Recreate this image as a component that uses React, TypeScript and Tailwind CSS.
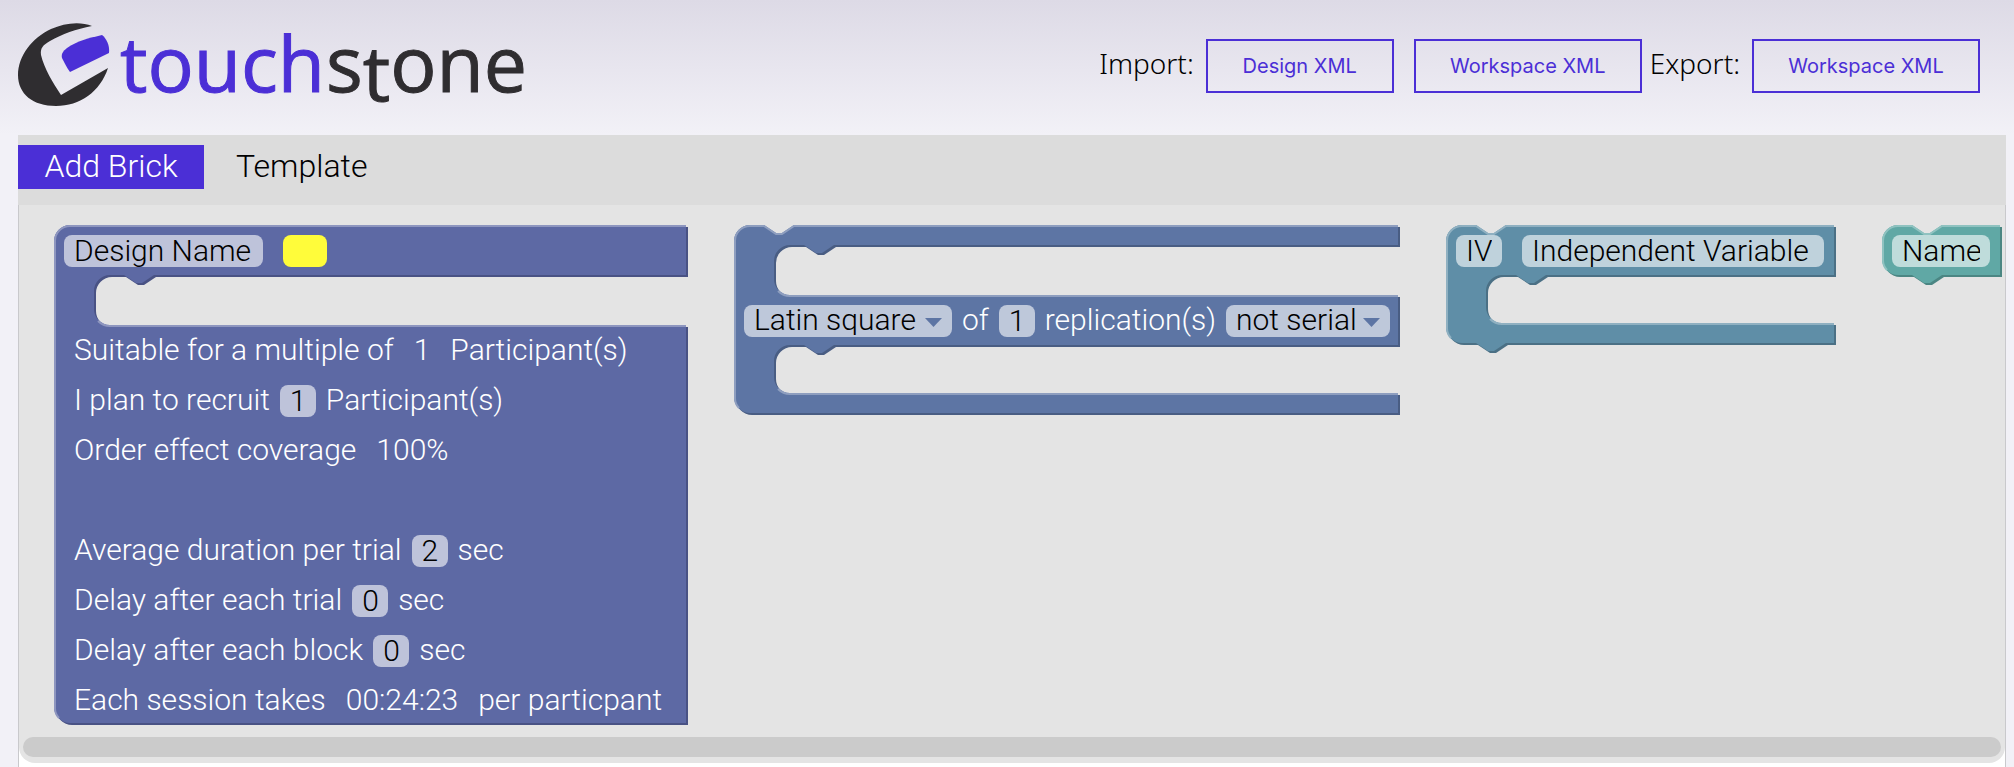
import type { ReactNode } from 'react';

type Cavity = { top: number; bottom: number };

type Tone = { fill: string; dark: string; light: string };

const INDIGO: Tone = { fill: '#5d69a4', dark: '#495284', light: '#8e96bf' };
const BLUE: Tone = { fill: '#5d75a4', dark: '#495d83', light: '#8e9ebf' };
const STEEL: Tone = { fill: '#5f8ea7', dark: '#4b7085', light: '#8fb0c1' };
const TEAL: Tone = { fill: '#60a8a5', dark: '#4b8683', light: '#8fc2c0' };

function outline(w: number, h: number, cavities: Cavity[], topNotch: boolean, bottomNotch: boolean) {
  const notch = topNotch ? 'H30 l12,8 6,0 12,-8' : '';
  const inner = cavities
    .map((c) => `V${c.top} H100 l-12,8 -6,0 -12,-8 h-14 a16,16 0 0 0 -16,16 V${c.bottom - 16} a16,16 0 0 0 16,16 H${w}`)
    .join(' ');
  const tab = bottomNotch ? 'H60 l-12,8 -6,0 -12,-8' : '';
  return `M0,16 A16,16 0 0 1 16,0 ${notch} H${w} ${inner} V${h} ${tab} H16 A16,16 0 0 1 0,${h - 16} Z`;
}

function highlight(w: number, h: number, cavities: Cavity[], topNotch: boolean) {
  const notch = topNotch ? 'H30 l12,8 6,0 12,-8' : '';
  const inner = cavities.map((c) => `M44,${c.bottom - 4} A17,17 0 0 0 56,${c.bottom + 1} H${w}`).join(' ');
  return `M5,${h - 5} A15,15 0 0 1 1,${h - 16} V16 A15,15 0 0 1 16,1 ${notch} H${w} ${inner}`;
}

function Brick({
  tone,
  w,
  h,
  cavities = [],
  topNotch = false,
  bottomNotch = false,
  className,
  children,
}: {
  tone: Tone;
  w: number;
  h: number;
  cavities?: Cavity[];
  topNotch?: boolean;
  bottomNotch?: boolean;
  className: string;
  children: ReactNode;
}) {
  const d = outline(w, h, cavities, topNotch, bottomNotch);
  return (
    <section className={`relative shrink-0 ${className}`}>
      <svg className="absolute inset-0 overflow-visible" width={w} height={h} aria-hidden="true">
        <path d={d} fill={tone.dark} transform="translate(2 2)" />
        <path d={d} fill={tone.fill} />
        <path d={highlight(w, h, cavities, topNotch)} fill="none" stroke={tone.light} strokeWidth="2" />
      </svg>
      <div className="relative">{children}</div>
    </section>
  );
}

const chip = 'h-8 rounded-lg bg-white/60 px-[10px] pb-[2px] text-black';

function TextField({ label, value, width }: { label: string; value: string; width: string }) {
  return <input type="text" aria-label={label} defaultValue={value} className={`${chip} ${width}`} />;
}

function SelectField({ label, value, options, width, arrow }: { label: string; value: string; options: string[]; width: string; arrow: string }) {
  return (
    <span className="relative flex">
      <select aria-label={label} defaultValue={value} className={`${chip} appearance-none ${width}`}>
        {options.map((o) => (
          <option key={o}>{o}</option>
        ))}
      </select>
      <svg className="pointer-events-none absolute right-[10px] top-[13px]" width="17" height="9" viewBox="0 0 17 9" aria-hidden="true">
        <path d="M0 0H17L8.500 9Z" fill={arrow} />
      </svg>
    </span>
  );
}

function Row({ children, wide = false }: { children?: ReactNode; wide?: boolean }) {
  return (
    <div className={`flex h-[50px] items-start pl-[10px] pt-[10px] leading-[30px] whitespace-nowrap ${wide ? 'gap-5' : 'gap-[10px]'}`}>
      {children}
    </div>
  );
}

function NumberRow({ id, before, value, after }: { id: string; before: string; value: string; after: string }) {
  return (
    <Row>
      <label htmlFor={id} className="pl-[10px]">
        {before}
      </label>
      <input id={id} type="text" inputMode="numeric" defaultValue={value} className={`${chip} w-9`} />
      <span>{after}</span>
    </Row>
  );
}

function ReadoutRow({ before, value, after }: { before: string; value: string; after?: string }) {
  return (
    <Row>
      <span className="pl-[10px]">{before}</span>
      <output className="px-[10px]">{value}</output>
      {after && <span>{after}</span>}
    </Row>
  );
}

function Logo() {
  return (
    <svg width="516" height="92" viewBox="0 0 516 92" role="img" aria-label="touchstone" className="overflow-visible">
      <path
        d="M74 8C62 3 46 5 33 11C14 20 0 38 0 57C0 76 15 88 38 88C62 88 82 74 90 50L43 77C35 65 26 50 23 37C22 30 25 27 32 23C44 16 58 11 74 8Z"
        fill="#2f2d30"
      />
      <path d="M84 17C88 20 92 27 91 35L52 54C49 50 46 44 44 40C43 36 45 33 49 30C59 23 71 20 84 17Z" fill="#4b2fd6" />
      <text y="74" fontSize="77" strokeWidth="1" className="font-['Open_Sans'] font-normal">
        <tspan x="102" fill="#4b2fd6" stroke="#4b2fd6">
          touch
        </tspan>
        <tspan x="308" fill="#2f2d30" stroke="#2f2d30">
          s
        </tspan>
        <tspan dy="9" fill="#2f2d30" stroke="#2f2d30">
          t
        </tspan>
        <tspan dy="-9" fill="#2f2d30" stroke="#2f2d30">
          one
        </tspan>
      </text>
    </svg>
  );
}

function OutlineButton({ children, width }: { children: ReactNode; width: string }) {
  return (
    <button
      type="button"
      className={`h-[54px] border-2 border-[#4b2fd6] font-['Inter',sans-serif] text-[20px] font-normal text-[#4b2fd6] ${width}`}
    >
      {children}
    </button>
  );
}

export default function App() {
  return (
    <div className="flex min-h-screen flex-col bg-[#f2f1f7] bg-[linear-gradient(to_bottom,#dddae6_0,#f2f1f7_135px)] pr-2 pl-[18px] font-['Roboto',sans-serif] font-light">
      <header className="flex h-[135px] items-start justify-between pr-[26px] pt-[18px]">
        <a href="#home">
          <Logo />
        </a>
        <div className="flex items-center pt-[21px] font-['Noto_Sans',sans-serif] text-[28px]">
          <span className="pr-3 pb-[6px]">Import:</span>
          <OutlineButton width="w-[188px]">Design XML</OutlineButton>
          <span className="w-5" />
          <OutlineButton width="w-[228px]">Workspace XML</OutlineButton>
          <span className="pr-3 pb-[6px] pl-2">Export:</span>
          <OutlineButton width="w-[228px]">Workspace XML</OutlineButton>
        </div>
      </header>

      <main className="flex flex-1 flex-col">
        <nav role="tablist" className="flex h-[70px] items-start bg-[#dcdcdc] pt-[10px] text-[32px] leading-[42px]">
          <button type="button" role="tab" aria-selected="true" className="w-[186px] bg-[#4b2fd6] pb-[2px] text-white">
            Add Brick
          </button>
          <button type="button" role="tab" aria-selected="false" className="px-8 pb-[2px] text-black">
            Template
          </button>
        </nav>

        <div className="flex-1 border-x border-[#c9c9cc] bg-white">
          <div className="overflow-hidden rounded-b-2xl bg-[#e4e4e4] pb-[6px]">
            <div className="flex items-start gap-[46px] pt-5 pb-3 pl-[35px] text-[30px] text-white">
              <Brick tone={INDIGO} w={632} h={498} cavities={[{ top: 50, bottom: 100 }]} className="h-[500px] w-[634px]">
                <Row wide>
                  <TextField label="Design name" value="Design Name" width="w-[199px]" />
                  <button type="button" aria-label="Design colour" className="h-8 w-11 rounded-lg bg-[#fffc3a]" />
                </Row>
                <Row />
                <ReadoutRow before="Suitable for a multiple of" value="1" after="Participant(s)" />
                <NumberRow id="recruit" before="I plan to recruit" value="1" after="Participant(s)" />
                <ReadoutRow before="Order effect coverage" value="100%" />
                <Row />
                <NumberRow id="duration" before="Average duration per trial" value="2" after="sec" />
                <NumberRow id="trial-delay" before="Delay after each trial" value="0" after="sec" />
                <NumberRow id="block-delay" before="Delay after each block" value="0" after="sec" />
                <ReadoutRow before="Each session takes" value="00:24:23" after="per particpant" />
              </Brick>

              <Brick
                tone={BLUE}
                w={664}
                h={188}
                topNotch
                cavities={[
                  { top: 20, bottom: 70 },
                  { top: 120, bottom: 168 },
                ]}
                className="h-[190px] w-[666px]"
              >
                <div className="h-[70px]" />
                <Row>
                  <SelectField
                    label="Design type"
                    value="Latin square"
                    options={['Latin square', 'Complete', 'Random']}
                    width="w-[208px]"
                    arrow={BLUE.fill}
                  />
                  <span>of</span>
                  <input type="text" aria-label="Replications" inputMode="numeric" defaultValue="1" className={`${chip} w-9`} />
                  <span>replication(s)</span>
                  <SelectField
                    label="Serial"
                    value="not serial"
                    options={['not serial', 'serial']}
                    width="w-[164px]"
                    arrow={BLUE.fill}
                  />
                </Row>
              </Brick>

              <Brick
                tone={STEEL}
                w={388}
                h={118}
                topNotch
                bottomNotch
                cavities={[{ top: 50, bottom: 98 }]}
                className="h-[120px] w-[390px]"
              >
                <Row wide>
                  <TextField label="Abbreviation" value="IV" width="w-[46px]" />
                  <TextField label="Variable name" value="Independent Variable" width="w-[302px]" />
                </Row>
              </Brick>

              <Brick tone={TEAL} w={118} h={50} topNotch bottomNotch className="h-[52px] w-[120px]">
                <Row>
                  <TextField label="Level name" value="Name" width="w-[98px]" />
                </Row>
              </Brick>
            </div>
            <div className="mx-1 h-5 rounded-full bg-[#cbcbcb]" />
          </div>
        </div>
      </main>
    </div>
  );
}
